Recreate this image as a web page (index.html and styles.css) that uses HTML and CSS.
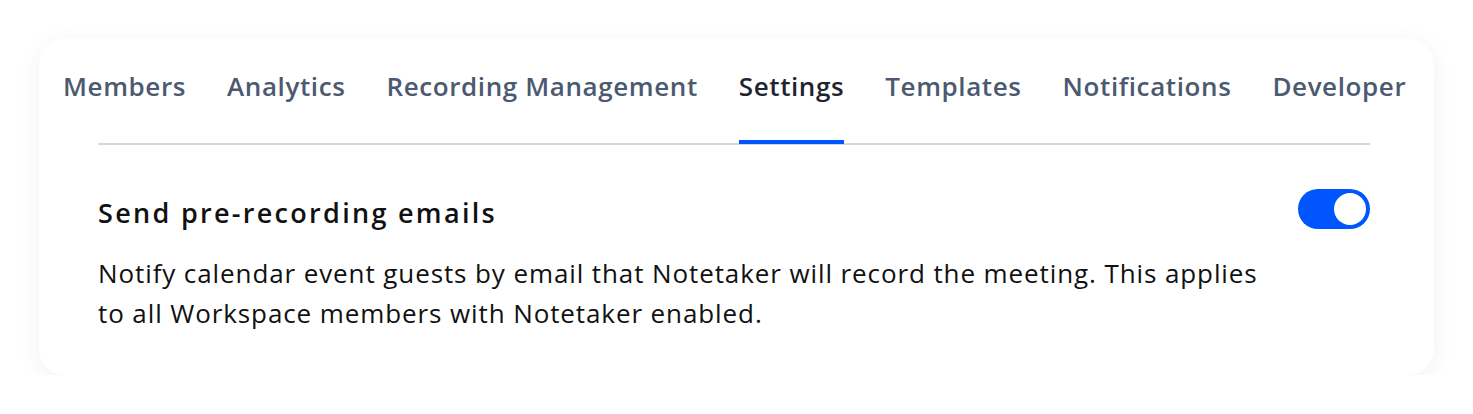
FILE: index.html
```html
<!DOCTYPE html>
<html lang="en">
<head>
<meta charset="utf-8">
<title>Settings</title>
<link rel="stylesheet" href="styles.css">
</head>
<body>
<div class="card">
  <nav class="tabs">
    <a class="tab">Members</a>
    <a class="tab">Analytics</a>
    <a class="tab">Recording Management</a>
    <a class="tab active">Settings</a>
    <a class="tab">Templates</a>
    <a class="tab">Notifications</a>
    <a class="tab">Developer</a>
  </nav>
  <div class="divider"></div>
  <section class="setting">
    <div class="setting-head">
      <h2 class="setting-title">Send pre-recording emails</h2>
      <span class="toggle on"><span class="knob"></span></span>
    </div>
    <p class="setting-desc">Notify calendar event guests by email that Notetaker will record the meeting. This applies to all Workspace members with Notetaker enabled.</p>
  </section>
</div>
</body>
</html>
```
FILE: styles.css
```css
* { box-sizing: border-box; }
html, body { margin: 0; padding: 0; background: #ffffff; }
body {
  font-family: "Open Sans", Lato, sans-serif;
  padding: 39px 39px 0 39px;
}
.card {
  width: 1395px;
  height: 336px;
  background: #fff;
  border-radius: 26px;
  box-shadow: 0 4px 24px rgba(0, 0, 0, 0.06);
}
.tabs {
  display: flex;
  gap: 41px;
  padding: 29px 0 0 24px;
  position: relative;
  z-index: 1;
}
.tab {
  font-size: 26px;
  font-weight: 600;
  letter-spacing: 0.6px;
  color: #4b5a70;
  line-height: 36px;
  padding-bottom: 36px;
  border-bottom: 4px solid transparent;
  white-space: nowrap;
}
.tab.active {
  color: #1f2530;
  border-bottom-color: #0055ff;
}
.divider {
  height: 2px;
  margin: -1px 64px 0 59px;
  background: #d3d9e3;
}
.setting {
  padding: 44px 64px 0 59px;
}
.setting-head {
  display: flex;
  justify-content: space-between;
  align-items: flex-start;
}
.setting-title {
  margin: 4px 0 0 0;
  font-size: 27px;
  line-height: 40px;
  font-weight: 600;
  letter-spacing: 2.3px;
  color: #111111;
}
.toggle {
  width: 72px;
  height: 40px;
  border-radius: 20px;
  background: #0055ff;
  display: flex;
  align-items: center;
  justify-content: flex-end;
  padding: 4px;
}
.knob {
  width: 32px;
  height: 32px;
  border-radius: 50%;
  background: #fff;
}
.setting-desc {
  margin: 20px 0 0 0;
  max-width: 1170px;
  font-size: 26px;
  letter-spacing: 0.9px;
  line-height: 40px;
  color: #111111;
}
```
